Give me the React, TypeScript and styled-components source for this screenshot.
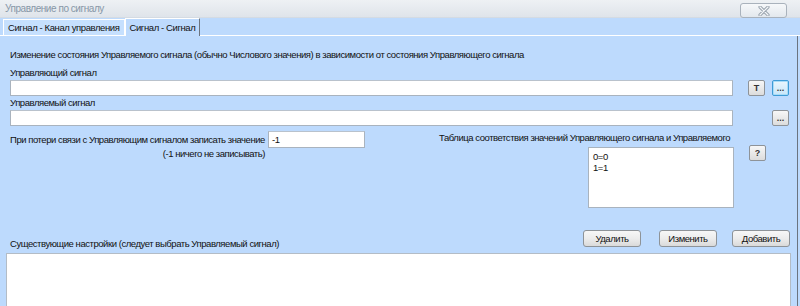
import React from "react";
import styled, { createGlobalStyle } from "styled-components";

const GlobalStyle = createGlobalStyle`
  html, body {
    margin: 0;
    padding: 0;
    background: #bddafd;
  }
  #root {
    width: 800px;
    height: 306px;
    overflow: hidden;
  }
`;

const Window = styled.div`
  width: 800px;
  height: 306px;
  display: flex;
  flex-direction: column;
  background: #bddafd;
  font-family: "Liberation Sans", Arial, sans-serif;
  font-size: 9.5px;
  letter-spacing: -0.45px;
  color: #111;
  overflow: hidden;
`;

const TitleBar = styled.div`
  height: 18px;
  flex-shrink: 0;
  display: flex;
  align-items: center;
  justify-content: space-between;
  padding: 0 13px 0 5px;
  background: linear-gradient(#eef1f4, #dfe4ea);
  border-bottom: 1px solid #d4dbe3;
  box-sizing: border-box;
`;

const Title = styled.span`
  color: #8797a7;
  font-size: 10px;
  letter-spacing: -0.45px;
`;

const CloseButton = styled.div`
  width: 47px;
  height: 15px;
  margin-top: 4px;
  box-sizing: border-box;
  border: 1px solid #a9b2bc;
  border-radius: 3px;
  background: linear-gradient(#f6f8fa, #e3e8ed);
  display: flex;
  align-items: center;
  justify-content: center;
`;

const TabStrip = styled.div`
  height: 18px;
  flex-shrink: 0;
  display: flex;
  align-items: flex-end;
  padding-left: 3px;
  border-bottom: 1px solid #fff;
  box-sizing: border-box;
`;

const Tab = styled.div<{ $active?: boolean }>`
  height: ${(p) => (p.$active ? "18px" : "16px")};
  box-sizing: border-box;
  display: flex;
  align-items: center;
  padding: 0 4px;
  margin-bottom: ${(p) => (p.$active ? "-1px" : "0")};
  background: ${(p) => (p.$active ? "#bddafd" : "#c6e0fe")};
  border: 1px solid #fff;
  border-bottom: none;
  border-right: ${(p) => (p.$active ? "1px solid #6b7480" : "1px solid #fff")};
  font-size: 9.5px;
  letter-spacing: -0.4px;
`;

const Panel = styled.div`
  flex: 1;
  display: flex;
  flex-direction: column;
  margin-left: 3px;
  margin-right: 2px;
  padding: 12px 7px 0 7px;
  border-right: 1px solid #6b7480;
`;

const Line = styled.div<{ $mt?: number }>`
  line-height: 13px;
  height: 13px;
  margin-top: ${(p) => p.$mt ?? 0}px;
  white-space: nowrap;
`;

const FieldRow = styled.div<{ $mt?: number }>`
  display: flex;
  align-items: center;
  margin-top: ${(p) => p.$mt ?? 0}px;
`;

const TextField = styled.div<{ $w?: number; $h?: number }>`
  width: ${(p) => (p.$w ? `${p.$w}px` : "auto")};
  flex: ${(p) => (p.$w ? "none" : "0 0 723px")};
  height: ${(p) => p.$h ?? 16}px;
  box-sizing: border-box;
  background: #fff;
  border: 1px solid #a9b3be;
  border-top-color: #b9c2cc;
  padding: 2px 3px;
  line-height: 12px;
`;

const SmallButton = styled.div<{ $focused?: boolean }>`
  width: 17px;
  height: 16px;
  box-sizing: border-box;
  border: 1px solid ${(p) => (p.$focused ? "#3e9bd6" : "#8e9398")};
  border-radius: 2px;
  background: ${(p) =>
    p.$focused
      ? "linear-gradient(#eaf6fd, #c8e6f9)"
      : "linear-gradient(#f7f7f7, #dcdcdc)"};
  box-shadow: ${(p) => (p.$focused ? "inset 0 0 0 1px #a8dcf8" : "none")};
  display: flex;
  align-items: center;
  justify-content: center;
  font-size: 9px;
  font-weight: bold;
  letter-spacing: 0;
  color: #333;
  line-height: 1;
`;

const ButtonGroup = styled.div<{ $ml: number }>`
  display: flex;
  gap: 7px;
  margin-left: ${(p) => p.$ml}px;
`;

const Middle = styled.div`
  display: flex;
  align-items: flex-start;
  justify-content: space-between;
  margin-top: 5px;
  padding-right: 24px;
`;

const LossGrid = styled.div`
  display: grid;
  grid-template-columns: 255px 97px;
  column-gap: 3px;
  align-items: center;
  align-content: start;
`;

const RightNote = styled.div`
  line-height: 13px;
  text-align: right;
  white-space: nowrap;
  margin-top: -1px;
`;

const TableBlock = styled.div`
  display: grid;
  grid-template-columns: 295px 17px;
  column-gap: 15px;
  align-items: start;
`;

const TableArea = styled.div`
  grid-column: 1;
  justify-self: end;
  width: 146px;
  height: 61px;
  margin-top: 3px;
  box-sizing: border-box;
  background: #fff;
  border: 1px solid #a9b3be;
  padding: 3px 4px;
  line-height: 11px;
`;

const HelpButton = styled(SmallButton)`
  margin-top: 1px;
`;

const BottomBar = styled.div`
  display: flex;
  align-items: flex-end;
  margin-top: 22px;
  height: 17px;
`;

const BarLabel = styled.div`
  flex: 1;
  line-height: 13px;
  margin-bottom: -3px;
  white-space: nowrap;
`;

const ActionButton = styled.div<{ $ml: number }>`
  width: 58px;
  height: 17px;
  box-sizing: border-box;
  margin-left: ${(p) => p.$ml}px;
  border: 1px solid #8e9398;
  border-radius: 3px;
  background: linear-gradient(#f7f7f7 0%, #ececec 50%, #dadada 100%);
  display: flex;
  align-items: center;
  justify-content: center;
`;

const ListBox = styled.div`
  flex: 1;
  margin: 6px -1px 0 -4px;
  background: #fff;
  border: 1px solid #b3bcc6;
  border-bottom: none;
`;

const CloseIcon = () => (
  <svg width="12" height="10" viewBox="0 0 12 10">
    <path
      d="M2 1 L10 9 M10 1 L2 9"
      stroke="#9aa4ae"
      strokeWidth="3.2"
      strokeLinecap="round"
    />
    <path
      d="M2 1 L10 9 M10 1 L2 9"
      stroke="#f4f6f8"
      strokeWidth="1.2"
      strokeLinecap="round"
    />
  </svg>
);

const App = () => {
  return (
    <Window>
      <GlobalStyle />
      <TitleBar>
        <Title>Управление по сигналу</Title>
        <CloseButton>
          <CloseIcon />
        </CloseButton>
      </TitleBar>
      <TabStrip>
        <Tab>Сигнал - Канал управления</Tab>
        <Tab $active>Сигнал - Сигнал</Tab>
      </TabStrip>
      <Panel>
        <Line>
          Изменение состояния Управляемого сигнала (обычно Числового значения) в
          зависимости от состояния Управляющего сигнала
        </Line>
        <Line $mt={5}>Управляющий сигнал</Line>
        <FieldRow $mt={1}>
          <TextField />
          <ButtonGroup $ml={15}>
            <SmallButton>T</SmallButton>
            <SmallButton $focused>...</SmallButton>
          </ButtonGroup>
        </FieldRow>
        <Line>Управляемый сигнал</Line>
        <FieldRow $mt={1}>
          <TextField />
          <ButtonGroup $ml={39}>
            <SmallButton>...</SmallButton>
          </ButtonGroup>
        </FieldRow>
        <Middle>
          <LossGrid>
            <Line>При потери связи с Управляющим сигналом записать значение</Line>
            <TextField $w={97} $h={17}>
              -1
            </TextField>
            <RightNote>(-1 ничего не записывать)</RightNote>
          </LossGrid>
          <TableBlock>
            <Line>Таблица соответствия значений Управляющего сигнала и Управляемого</Line>
            <div />
            <TableArea>
              0=0
              <br />
              1=1
            </TableArea>
            <HelpButton>?</HelpButton>
          </TableBlock>
        </Middle>
        <BottomBar>
          <BarLabel>Существующие настройки (следует выбрать Управляемый сигнал)</BarLabel>
          <ActionButton $ml={0}>Удалить</ActionButton>
          <ActionButton $ml={18}>Изменить</ActionButton>
          <ActionButton $ml={15}>Добавить</ActionButton>
        </BottomBar>
        <ListBox />
      </Panel>
    </Window>
  );
};

export default App;
